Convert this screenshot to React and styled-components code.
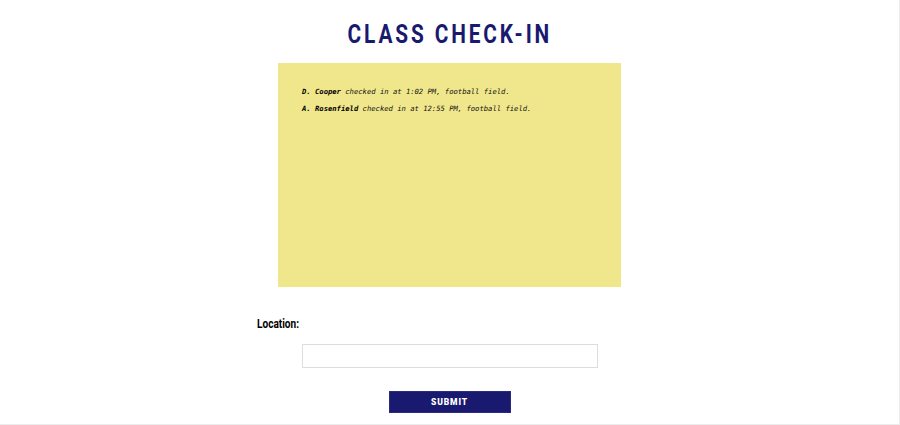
import styled, { createGlobalStyle } from 'styled-components';

const GlobalStyle = createGlobalStyle`
  html, body {
    margin: 0;
    padding: 0;
    background: #fff;
  }
  body {
    font-family: Roboto, "Liberation Sans", sans-serif;
  }
`;

const checkins = [
  { name: 'D. Cooper', time: '1:02 PM', place: 'football field' },
  { name: 'A. Rosenfield', time: '12:55 PM', place: 'football field' },
];

export default function App() {
  return (
    <>
      <GlobalStyle />
      <Page>
        <Title>CLASS CHECK-IN</Title>
        <Board>
          {checkins.map((c) => (
            <Entry key={c.name}>
              <Name>{c.name}</Name> checked in at {c.time}, {c.place}.
            </Entry>
          ))}
        </Board>
        <Form onSubmit={(e) => e.preventDefault()}>
          <Label htmlFor="location">Location:</Label>
          <Input id="location" type="text" />
          <Submit type="submit">SUBMIT</Submit>
        </Form>
      </Page>
    </>
  );
}

const Page = styled.div`
  box-sizing: border-box;
  width: 900px;
  height: 425px;
  border-right: 1px solid #ececec;
  border-bottom: 1px solid #ececec;
  display: flex;
  flex-direction: column;
  align-items: center;
  padding-top: 20px;
`;

const Title = styled.h1`
  margin: 0;
  font-family: Roboto, "Liberation Sans", sans-serif;
  font-weight: 700;
  font-size: 26px;
  line-height: 28px;
  letter-spacing: 3.6px;
  color: #191970;
  transform: scaleX(0.8);
`;

const Board = styled.div`
  box-sizing: border-box;
  width: 343px;
  height: 224px;
  margin-top: 15px;
  background: #f0e68c;
  padding: 25px 24px;
`;

const Entry = styled.p`
  margin: 0 0 9px;
  font-family: "DejaVu Sans Mono", "Liberation Mono", monospace;
  font-style: italic;
  font-size: 7.2px;
  line-height: 8px;
  color: #111;
`;

const Name = styled.b`
  font-weight: 700;
  color: #000;
`;

const Form = styled.form`
  width: 386px;
  margin-top: 30px;
  display: flex;
  flex-direction: column;
  align-items: center;
`;

const Label = styled.label`
  align-self: flex-start;
  font-weight: 700;
  font-size: 12px;
  line-height: 14px;
  color: #000;
  transform: scaleX(0.84);
  transform-origin: left center;
`;

const Input = styled.input`
  box-sizing: border-box;
  width: 296px;
  height: 24px;
  margin-top: 13px;
  border: 1px solid #ddd;
  outline: none;
  padding: 0 6px;
`;

const Submit = styled.button`
  box-sizing: border-box;
  width: 122px;
  height: 22px;
  margin-top: 23px;
  border: 1px solid #2a2a80;
  background: #191970;
  color: #fff;
  font-family: Roboto, "Liberation Sans", sans-serif;
  font-weight: 900;
  font-size: 8.5px;
  letter-spacing: 0.9px;
  cursor: pointer;
`;
